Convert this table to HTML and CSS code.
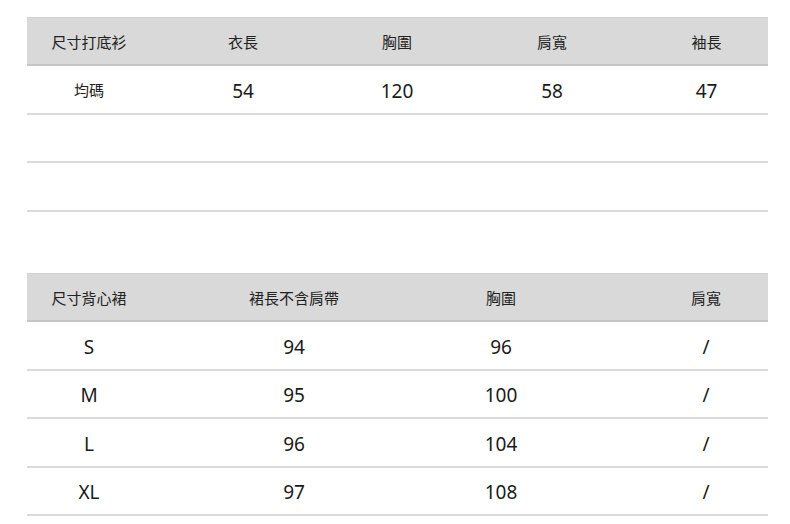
FILE: index.html
```html
<!DOCTYPE html>
<html lang="zh-Hant">
<head>
<meta charset="utf-8">
<title>尺寸表</title>
<link rel="stylesheet" href="styles.css">
</head>
<body>
<div class="sheet">
  <div class="table t1">
    <div class="row head">
      <div class="cell cjk">尺寸打底衫</div>
      <div class="cell cjk">衣長</div>
      <div class="cell cjk">胸圍</div>
      <div class="cell cjk">肩寬</div>
      <div class="cell cjk">袖長</div>
    </div>
    <div class="row">
      <div class="cell cjk">均碼</div>
      <div class="cell num">54</div>
      <div class="cell num">120</div>
      <div class="cell num">58</div>
      <div class="cell num">47</div>
    </div>
    <div class="row empty"></div>
    <div class="row empty"></div>
  </div>

  <div class="table t2">
    <div class="row head">
      <div class="cell cjk">尺寸背心裙</div>
      <div class="cell cjk">裙長不含肩帶</div>
      <div class="cell cjk">胸圍</div>
      <div class="cell cjk last">肩寬</div>
    </div>
    <div class="row">
      <div class="cell num">S</div>
      <div class="cell num">94</div>
      <div class="cell num">96</div>
      <div class="cell num last">/</div>
    </div>
    <div class="row">
      <div class="cell num">M</div>
      <div class="cell num">95</div>
      <div class="cell num">100</div>
      <div class="cell num last">/</div>
    </div>
    <div class="row">
      <div class="cell num">L</div>
      <div class="cell num">96</div>
      <div class="cell num">104</div>
      <div class="cell num last">/</div>
    </div>
    <div class="row">
      <div class="cell num">XL</div>
      <div class="cell num">97</div>
      <div class="cell num">108</div>
      <div class="cell num last">/</div>
    </div>
  </div>
</div>
</body>
</html>
```

FILE: styles.css
```css
* { box-sizing: border-box; }

html, body {
  margin: 0;
  padding: 0;
  background: #ffffff;
}

body {
  font-family: "Noto Sans", "Noto Sans CJK TC", sans-serif;
  color: #1c1c1c;
  width: 790px;
  height: 524px;
  overflow: hidden;
}

.sheet {
  padding: 17px 0 0 27px;
  display: flex;
  flex-direction: column;
}

.table {
  width: 741px;
  display: flex;
  flex-direction: column;
}

.t2 {
  margin-top: 61.5px;
}

.row {
  display: grid;
  height: 48.5px;
  border-bottom: 2px solid #dadada;
  align-items: center;
}

.t1 .row {
  grid-template-columns: 124px 184px 124px 186px 123px;
}

.t2 .row {
  grid-template-columns: 124px 286px 128px 203px;
}

.row.head {
  height: 49px;
  background: #d9d9d9;
  border-top: 1px solid #d0d0d0;
  border-bottom: 2px solid #c5c5c5;
}

.cell {
  text-align: center;
  white-space: nowrap;
}

.cjk {
  font-family: "Noto Sans CJK TC", "Noto Sans", sans-serif;
  font-size: 15px;
  color: #222222;
}

.num {
  font-size: 19px;
  color: #1a1a1a;
  padding-top: 3px;
}

.cell.last {
  padding-left: 79px;
}
```
